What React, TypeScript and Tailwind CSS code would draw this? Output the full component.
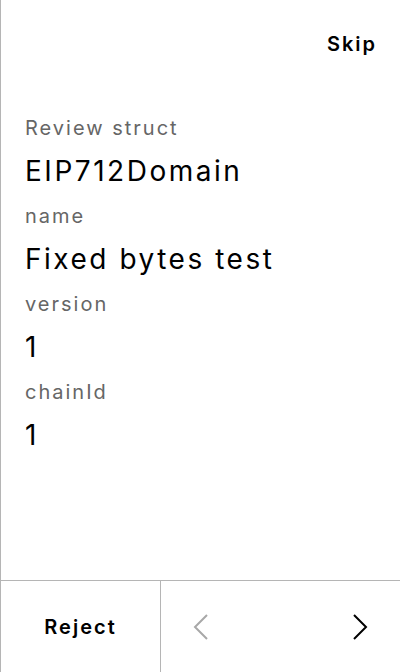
const fields = [
  { label: 'Review struct', value: 'EIP712Domain' },
  { label: 'name', value: 'Fixed bytes test' },
  { label: 'version', value: '1' },
  { label: 'chainId', value: '1' },
];

const Chevron: React.FC<{ dir: 'left' | 'right'; className?: string }> = ({ dir, className }) => (
  <svg width="16" height="26" viewBox="0 0 16 26" fill="none" className={className}>
    <polyline
      points={dir === 'left' ? '14,1 2,13 14,25' : '2,1 14,13 2,25'}
      stroke="currentColor"
      strokeWidth="2"
    />
  </svg>
);

export default function App() {
  return (
    <div
      className="w-[400px] h-[672px] bg-white border-l border-[#b5b5b5] flex flex-col text-black"
      style={{ fontFamily: 'Inter, "Noto Sans", sans-serif' }}
    >
      {/* Header */}
      <div className="flex justify-end pt-[30px] pr-[23px]">
        <button className="text-[20px] leading-[28px] font-semibold tracking-[0.1em]">Skip</button>
      </div>

      {/* Fields */}
      <div className="flex-1 px-[24px] pt-[56px]">
        {fields.map((f, i) => (
          <div key={i} className={i > 0 ? 'mt-[13px]' : ''}>
            <div className="text-[20px] leading-[28px] tracking-[0.1em] text-[#666666]">{f.label}</div>
            <div className="mt-[11px] text-[28px] leading-[36px] tracking-[0.09em]">{f.value}</div>
          </div>
        ))}
      </div>

      {/* Footer */}
      <div className="h-[92px] border-t border-[#b5b5b5] flex">
        <button className="w-[160px] border-r border-[#b5b5b5] flex items-center justify-center text-[20px] font-semibold tracking-[0.1em]">
          Reject
        </button>
        <div className="flex-1 flex items-center justify-between pl-[32px] pr-[32px]">
          <Chevron dir="left" className="text-[#a8a8a8]" />
          <Chevron dir="right" className="text-black" />
        </div>
      </div>
    </div>
  );
}
